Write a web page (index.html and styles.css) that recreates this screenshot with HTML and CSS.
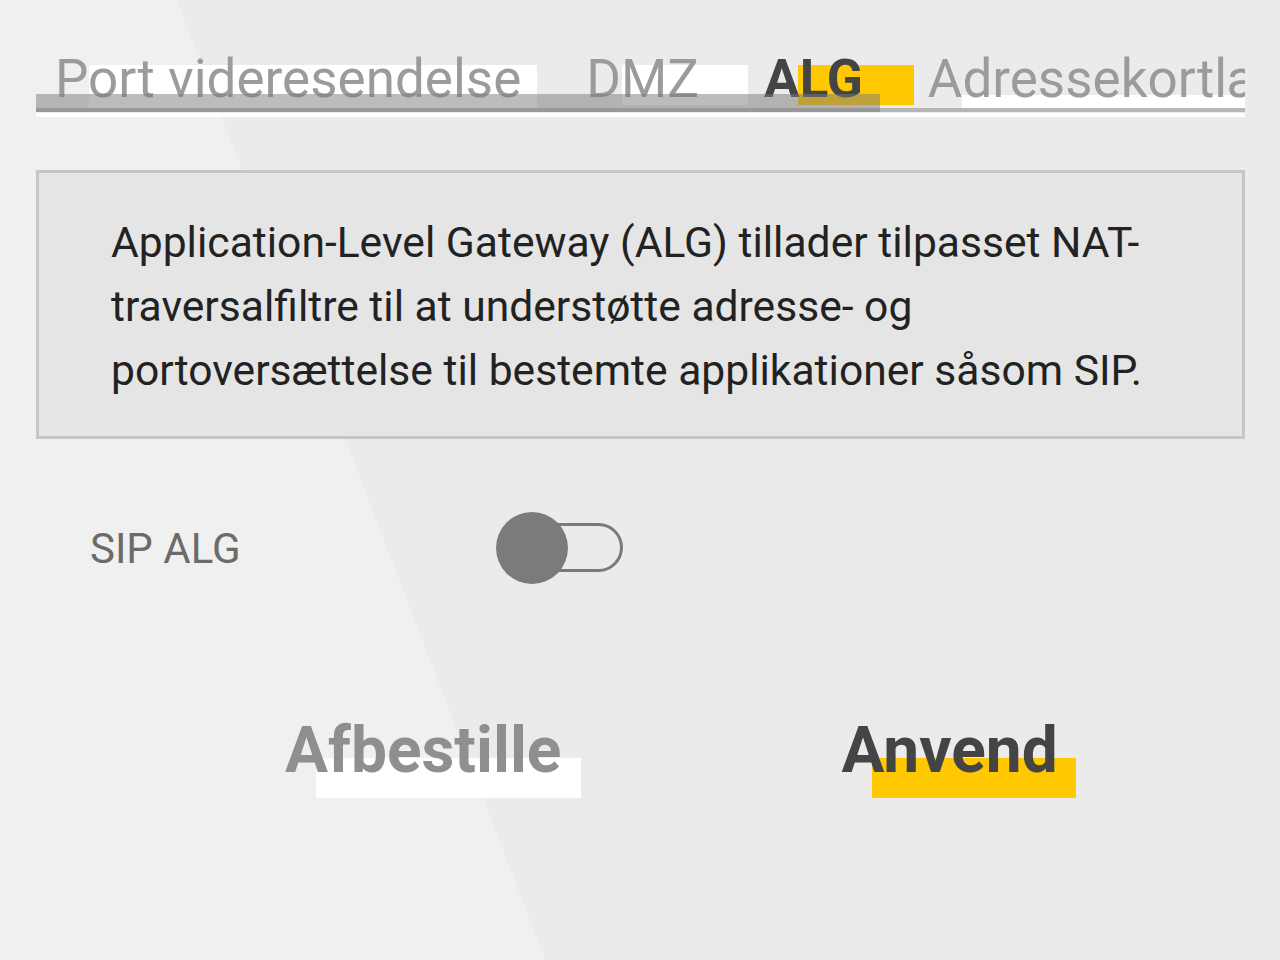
FILE: index.html
```html
<!DOCTYPE html>
<html lang="da">
<head>
<meta charset="utf-8">
<title>ALG</title>
<link rel="stylesheet" href="styles.css">
</head>
<body>
<div class="page">
  <nav class="tabs">
    <div class="tab-list">
      <span class="tab tab-port">Port videresendelse</span>
      <span class="tab tab-dmz">DMZ</span>
      <span class="tab tab-alg active">ALG</span>
      <span class="tab tab-addr">Adressekortlægning</span>
    </div>
  </nav>

  <section class="info">
    <p>Application-Level Gateway (ALG) tillader tilpasset NAT-traversalfiltre til at understøtte adresse- og portoversættelse til bestemte applikationer såsom SIP.</p>
  </section>

  <div class="setting">
    <span class="setting-label">SIP ALG</span>
    <span class="switch" role="switch" aria-checked="false"><span class="knob"></span></span>
  </div>

  <div class="actions">
    <span class="btn btn-cancel">Afbestille</span>
    <span class="btn btn-apply">Anvend</span>
  </div>
</div>
</body>
</html>
```

FILE: styles.css
```css
html, body {
  margin: 0;
  padding: 0;
}
body {
  width: 1280px;
  height: 960px;
  overflow: hidden;
  font-family: Roboto, "Liberation Sans", sans-serif;
  background: linear-gradient(69deg, #f0f0f0 509px, #ebebeb 509px);
}
.page {
  padding-top: 40px;
}

/* Tabs */
.tabs {
  position: relative;
  margin-left: 36px;
  width: 1209px;
  height: 77px;
  overflow: hidden;
}
.tabs::before {
  content: "";
  position: absolute;
  left: 0;
  top: 54px;
  width: 844px;
  height: 18px;
  background: rgba(121, 121, 121, 0.5);
  z-index: 2;
}
.tabs::after {
  content: "";
  position: absolute;
  left: 0;
  top: 68px;
  width: 100%;
  height: 4px;
  background: #b6b6b6;
  box-shadow: 0 5px 0 #ffffff;
  z-index: 1;
}
.tab-list {
  display: flex;
  gap: 65px;
  padding-top: 8px;
  padding-left: 19px;
  white-space: nowrap;
}
.tab {
  position: relative;
  z-index: 0;
  font-size: 53px;
  line-height: 62px;
  color: #9b9b9b;
  flex: none;
}
.tab::before {
  content: "";
  position: absolute;
  z-index: -1;
  background: #ffffff;
}
.tab.active {
  color: #444444;
  font-weight: 700;
}
.tab-port::before {
  left: 34px;
  top: 17px;
  width: 448px;
  height: 47px;
}
.tab-dmz::before {
  left: 36px;
  top: 17px;
  width: 126px;
  height: 40px;
}
.tab-alg::before {
  left: 34px;
  top: 17px;
  width: 116px;
  height: 40px;
  background: #ffc800;
}
.tab-addr::before {
  left: 34px;
  top: 47px;
  width: 420px;
  height: 14px;
}

/* Info box */
.info {
  margin: 53px 0 0 36px;
  width: 1209px;
  box-sizing: border-box;
  border: 3px solid #c6c6c6;
  background: #e5e5e5;
  padding: 37px 60px 34px 72px;
}
.info p {
  margin: 0;
  font-size: 42.6px;
  line-height: 64px;
  color: #222222;
}

/* Setting row */
.setting {
  display: flex;
  align-items: center;
  margin: 73px 0 0 90px;
  height: 72px;
}
.setting-label {
  width: 406px;
  font-size: 42px;
  color: #6b6b6b;
}
.switch {
  position: relative;
  display: block;
  width: 127px;
  height: 72px;
}
.switch::before {
  content: "";
  position: absolute;
  left: 34px;
  top: 11px;
  width: 93px;
  height: 49px;
  box-sizing: border-box;
  border: 3px solid #7a7a7a;
  border-radius: 25px;
}
.knob {
  position: absolute;
  left: 0;
  top: 0;
  width: 72px;
  height: 72px;
  border-radius: 50%;
  background: #7b7b7b;
}

/* Actions */
.actions {
  display: flex;
  gap: 280px;
  margin-top: 129px;
  padding-left: 285px;
}
.btn {
  position: relative;
  z-index: 0;
  font-size: 64px;
  line-height: 76px;
  font-weight: 700;
  white-space: nowrap;
}
.btn::before {
  content: "";
  position: absolute;
  z-index: -1;
  left: 31px;
  top: 45px;
  height: 40px;
}
.btn-cancel {
  color: #8f8f8f;
}
.btn-cancel::before {
  width: 265px;
  background: #ffffff;
}
.btn-apply {
  color: #444444;
}
.btn-apply::before {
  width: 204px;
  background: #ffc800;
}
```
